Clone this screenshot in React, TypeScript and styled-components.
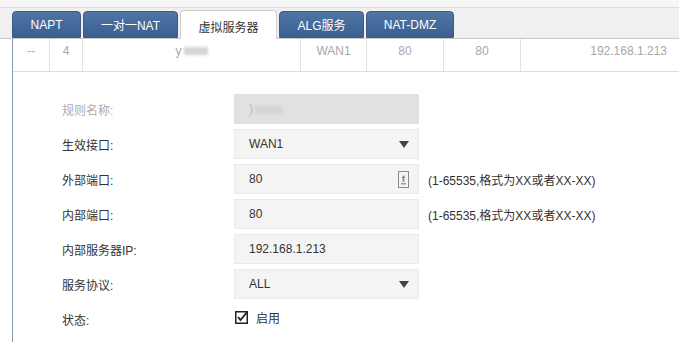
import { FC } from 'react';
import styled, { createGlobalStyle } from 'styled-components';

const GlobalStyle = createGlobalStyle`
  html, body {
    margin: 0;
    padding: 0;
    background: #ffffff;
  }
  body {
    font-family: 'Liberation Sans', 'Noto Sans CJK SC', sans-serif;
    font-size: 12px;
    color: #333;
  }
`;

const tabs = [
  { label: 'NAPT', width: 69 },
  { label: '一对一NAT', width: 95 },
  { label: '虚拟服务器', width: 97, active: true },
  { label: 'ALG服务', width: 85 },
  { label: 'NAT-DMZ', width: 88 }
];

const columns: { text: string; width: number | string; align?: string }[] = [
  { text: '--', width: 37 },
  { text: '4', width: 33 },
  { text: 'y', width: 218 },
  { text: 'WAN1', width: 66 },
  { text: '80', width: 77 },
  { text: '80', width: 77 },
  { text: '192.168.1.213', width: 'auto', align: 'right' }
];

const Blur: FC<{ w: number }> = ({ w }) => <Smudge style={{ width: w }} />;

const Smudge = styled.span`
  display: inline-block;
  height: 8px;
  margin-left: 2px;
  background: #d4d4d4;
  filter: blur(1.5px);
  vertical-align: middle;
`;

const Arrow = () => (
  <svg width="10" height="7" viewBox="0 0 10 7">
    <path d="M0 0 H10 L5 7 Z" fill="#444" />
  </svg>
);

const SpinIcon = () => (
  <svg width="11" height="17" viewBox="0 0 11 17">
    <rect x="0.5" y="0.5" width="10" height="16" fill="#f4f4f4" stroke="#8a8a8a" />
    <path d="M5.5 4 L3.5 7 H7.5 Z" fill="#888" />
    <rect x="4.5" y="7" width="2" height="4" fill="#999" />
    <rect x="3" y="12" width="5" height="1.5" fill="#999" />
  </svg>
);

const CheckIcon = () => (
  <svg width="13" height="13" viewBox="0 0 13 13">
    <rect x="0.75" y="0.75" width="11.5" height="11.5" fill="#fff" stroke="#222" strokeWidth="1.5" />
    <path d="M3 6 L5.5 9 L12.5 0.5" fill="none" stroke="#222" strokeWidth="1.8" />
  </svg>
);

const App: FC = () => {
  return (
    <>
      <GlobalStyle />
      <Page>
        <TopStrip />
        <TabBar>
          {tabs.map(t => (
            <Tab key={t.label} $active={!!t.active} style={{ width: t.width }}>
              {t.label}
            </Tab>
          ))}
        </TabBar>
        <Panel>
          <Row>
            {columns.map((c, i) => (
              <Cell
                key={i}
                $align={c.align || 'center'}
                style={{ width: c.width, flex: c.width === 'auto' ? 1 : 'none' }}
              >
                {c.text}
                {i === 2 && <Blur w={24} />}
              </Cell>
            ))}
          </Row>
          <Form>
            <FormRow>
              <Label $disabled>规则名称:</Label>
              <Field $disabled>
                <span>
                  )<Blur w={28} />
                </span>
              </Field>
            </FormRow>
            <FormRow>
              <Label>生效接口:</Label>
              <Field>
                <span>WAN1</span>
                <Arrow />
              </Field>
            </FormRow>
            <FormRow>
              <Label>外部端口:</Label>
              <Field>
                <span>80</span>
                <SpinIcon />
              </Field>
              <Hint>(1-65535,格式为XX或者XX-XX)</Hint>
            </FormRow>
            <FormRow>
              <Label>内部端口:</Label>
              <Field>
                <span>80</span>
              </Field>
              <Hint>(1-65535,格式为XX或者XX-XX)</Hint>
            </FormRow>
            <FormRow>
              <Label>内部服务器IP:</Label>
              <Field>
                <span>192.168.1.213</span>
              </Field>
            </FormRow>
            <FormRow>
              <Label>服务协议:</Label>
              <Field>
                <span>ALL</span>
                <Arrow />
              </Field>
            </FormRow>
            <FormRow>
              <Label>状态:</Label>
              <CheckWrap>
                <CheckIcon />
                <span>启用</span>
              </CheckWrap>
            </FormRow>
          </Form>
        </Panel>
      </Page>
    </>
  );
};

const Page = styled.div`
  width: 679px;
  height: 342px;
  overflow: hidden;
  display: flex;
  flex-direction: column;
`;

const TopStrip = styled.div`
  height: 7px;
  background: #f7f7f7;
  border-bottom: 1px solid #dcdcdc;
`;

const TabBar = styled.div`
  height: 30px;
  display: flex;
  align-items: flex-end;
  gap: 2px;
  padding-left: 12px;
  background: #f0f0f0;
  border-bottom: 1px solid #c9c9c9;
`;

const Tab = styled.div<{ $active: boolean }>`
  box-sizing: border-box;
  height: ${p => (p.$active ? 29 : 27)}px;
  margin-bottom: ${p => (p.$active ? -1 : 0)}px;
  display: flex;
  align-items: center;
  justify-content: center;
  padding-top: ${p => (p.$active ? 2 : 0)}px;
  border-radius: 4px 4px 0 0;
  font-size: 12px;
  color: ${p => (p.$active ? '#333' : '#fff')};
  background: ${p =>
    p.$active ? '#ffffff' : 'linear-gradient(to bottom, #4f75a6, #3b5f8f)'};
  border: 1px solid ${p => (p.$active ? '#cfcfcf' : '#3a5b88')};
  border-bottom: ${p => (p.$active ? 'none' : '1px solid #3a5b88')};
`;

const Panel = styled.div`
  flex: 1;
  margin-left: 12px;
  border-left: 1px solid #8497b5;
  background: #fff;
`;

const Row = styled.div`
  height: 32px;
  display: flex;
  border-bottom: 1px solid #dedede;
`;

const Cell = styled.div<{ $align: string }>`
  box-sizing: border-box;
  display: flex;
  align-items: center;
  justify-content: ${p => (p.$align === 'right' ? 'flex-end' : 'center')};
  padding: 0 12px 8px;
  font-size: 12px;
  color: #a8a8a8;
  border-right: 1px solid #e2e2e2;
  &:last-child {
    border-right: none;
  }
`;

const Form = styled.div`
  display: flex;
  flex-direction: column;
  gap: 5px;
  padding: 22px 0 0 49px;
`;

const FormRow = styled.div`
  height: 30px;
  display: flex;
  align-items: center;
`;

const Label = styled.div<{ $disabled?: boolean }>`
  width: 172px;
  flex: none;
  color: ${p => (p.$disabled ? '#ababab' : '#333')};
`;

const Field = styled.div<{ $disabled?: boolean }>`
  box-sizing: border-box;
  width: 185px;
  height: 30px;
  flex: none;
  display: flex;
  align-items: center;
  justify-content: space-between;
  padding: 0 9px 0 14px;
  background: ${p => (p.$disabled ? '#e1e1e1' : '#f4f4f4')};
  border: 1px solid ${p => (p.$disabled ? '#e1e1e1' : '#e9e9e9')};
  color: ${p => (p.$disabled ? '#bbb' : '#333')};
`;

const Hint = styled.div`
  margin-left: 9px;
  color: #333;
`;

const CheckWrap = styled.div`
  display: flex;
  align-items: center;
  gap: 8px;
  padding-left: 1px;
  margin-top: -3px;
`;

export default App;
